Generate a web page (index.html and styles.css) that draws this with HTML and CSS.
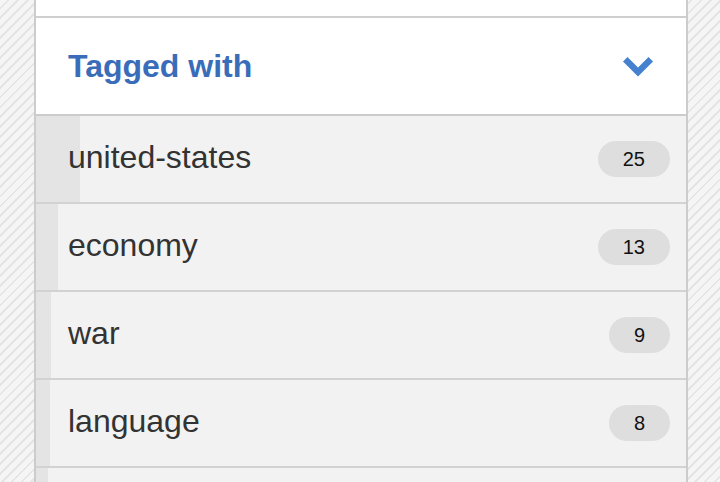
FILE: index.html
```html
<!DOCTYPE html>
<html>
<head>
<meta charset="utf-8">
<link rel="stylesheet" href="styles.css">
</head>
<body>
<div class="panel">
  <div class="top"></div>
  <div class="header">
    <h2 class="title">Tagged with</h2>
    <svg class="chevron" width="32" height="22" viewBox="0 0 32 22">
      <path d="M1 5.5 L5.5 1 L16 11.5 L26.5 1 L31 5.5 L16 20.5 Z" fill="#4581cf"/>
    </svg>
  </div>
  <ul class="tags">
    <li class="tag"><span class="bar" style="width:44px"></span><span class="name">united-states</span><span class="count">25</span></li>
    <li class="tag"><span class="bar" style="width:22px"></span><span class="name">economy</span><span class="count">13</span></li>
    <li class="tag"><span class="bar" style="width:15px"></span><span class="name">war</span><span class="count">9</span></li>
    <li class="tag"><span class="bar" style="width:14px"></span><span class="name">language</span><span class="count">8</span></li>
    <li class="tag"><span class="bar" style="width:12px"></span></li>
  </ul>
</div>
</body>
</html>
```

FILE: styles.css
```css
html, body {
  margin: 0;
  padding: 0;
  height: 100%;
  overflow: hidden;
}
body {
  font-family: "Liberation Sans", Arial, sans-serif;
  background-color: #f3f3f3;
  background-image: repeating-linear-gradient(135deg, #f5f5f5 0px, #f5f5f5 5px, #e4e4e4 5px, #e4e4e4 7px);
}
.panel {
  margin-left: 34px;
  width: 650px;
  border-left: 2px solid #cccccc;
  border-right: 2px solid #cccccc;
  background: #f2f2f2;
  height: 100%;
}
.top {
  height: 16px;
  background: #ffffff;
  border-bottom: 2px solid #cfcfcf;
}
.header {
  height: 96px;
  background: #ffffff;
  border-bottom: 2px solid #cccccc;
  display: flex;
  align-items: center;
  justify-content: space-between;
  padding: 0 32px;
}
.title {
  margin: 0;
  font-size: 32px;
  font-weight: bold;
  color: #3a6db9;
}
.chevron {
  display: block;
  margin-top: 2px;
}
.tags {
  list-style: none;
  margin: 0;
  padding: 0;
}
.tag {
  position: relative;
  height: 86px;
  border-bottom: 2px solid #d2d2d2;
  display: flex;
  align-items: center;
  justify-content: space-between;
  padding: 0 16px 0 32px;
}
.bar {
  position: absolute;
  left: 0;
  top: 0;
  bottom: 0;
  background: #e4e4e4;
}
.name {
  position: relative;
  font-size: 32px;
  line-height: 36px;
  color: #333333;
  margin-top: -5px;
}
.count {
  position: relative;
  font-size: 20px;
  color: #111111;
  background: #dedede;
  border-radius: 18px;
  height: 36px;
  line-height: 36px;
  padding: 0 25px;
}
```
